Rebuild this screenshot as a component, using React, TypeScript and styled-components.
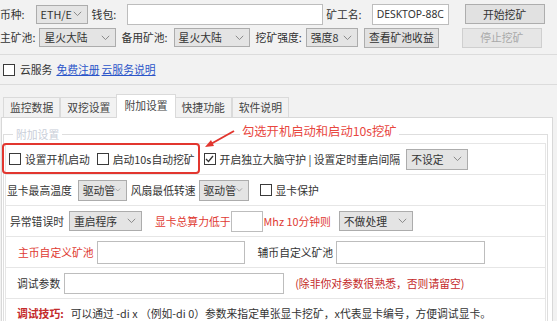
import React from "react";
import styled, { createGlobalStyle } from "styled-components";

const GlobalStyle = createGlobalStyle`
  body {
    margin: 0;
    background: #f2f2f2;
  }
`;

const Window = styled.div`
  position: relative;
  width: 557px;
  height: 321px;
  overflow: hidden;
  background: #f2f2f2;
  font-family: "Noto Sans CJK SC", "Microsoft YaHei", sans-serif;
  font-size: 10.8px;
  line-height: 1;
  color: #333;
`;

const ToolRow = styled.div<{ $top: number; $h: number }>`
  display: flex;
  align-items: center;
  height: ${(p) => p.$h}px;
  margin-top: ${(p) => p.$top}px;
  white-space: nowrap;
`;

const Text = styled.span<{ $ml?: number; $color?: string; $bold?: boolean }>`
  flex-shrink: 0;
  margin-left: ${(p) => p.$ml ?? 0}px;
  color: ${(p) => p.$color ?? "#333"};
  font-weight: ${(p) => (p.$bold ? 700 : 400)};
`;

const LinkText = styled.a<{ $ml?: number }>`
  flex-shrink: 0;
  margin-left: ${(p) => p.$ml ?? 0}px;
  color: #2b55c9;
  text-decoration: underline;
`;

const SelectBox = styled.div<{ $w: number; $h: number; $ml: number }>`
  box-sizing: border-box;
  flex-shrink: 0;
  display: flex;
  align-items: center;
  justify-content: space-between;
  width: ${(p) => p.$w}px;
  height: ${(p) => p.$h}px;
  margin-left: ${(p) => p.$ml}px;
  padding: 0 5px 0 4px;
  background: #e4e4e4;
  border: 1px solid #acacac;
  overflow: hidden;
`;

const Field = styled.div<{ $w: number; $h: number; $ml: number }>`
  box-sizing: border-box;
  flex-shrink: 0;
  display: flex;
  align-items: center;
  width: ${(p) => p.$w}px;
  height: ${(p) => p.$h}px;
  margin-left: ${(p) => p.$ml}px;
  padding-left: 4px;
  background: #fff;
  border: 1px solid #bdbdbd;
  font-family: "Noto Sans", "DejaVu Sans", sans-serif;
  font-size: 10.4px;
`;

const Button = styled.div<{ $w: number; $ml: number; $disabled?: boolean }>`
  box-sizing: border-box;
  flex-shrink: 0;
  display: flex;
  align-items: center;
  justify-content: center;
  width: ${(p) => p.$w}px;
  height: 20px;
  margin-left: ${(p) => p.$ml}px;
  background: ${(p) => (p.$disabled ? "#e6e6e6" : "#e1e1e1")};
  border: 1px solid ${(p) => (p.$disabled ? "#cfcfcf" : "#adadad")};
  color: ${(p) => (p.$disabled ? "#a9a9a9" : "#333")};
`;

const Divider = styled.div<{ $top: number }>`
  height: 1px;
  margin-top: ${(p) => p.$top}px;
  background: #dcdcdc;
`;

const Box = styled.div<{ $ml: number }>`
  box-sizing: border-box;
  flex-shrink: 0;
  display: flex;
  align-items: center;
  justify-content: center;
  width: 12px;
  height: 12px;
  margin-left: ${(p) => p.$ml}px;
  background: #fff;
  border: 1px solid #3a3a3a;
`;

const TabStrip = styled.div`
  display: flex;
  align-items: flex-end;
  height: 32px;
  padding-left: 3px;
  position: relative;
  z-index: 1;
`;

const Tab = styled.div<{ $active?: boolean }>`
  box-sizing: border-box;
  display: flex;
  align-items: center;
  justify-content: center;
  height: ${(p) => (p.$active ? 24 : 20)}px;
  margin: ${(p) => (p.$active ? "0 -1px -1px" : "0")};
  padding: ${(p) => (p.$active ? "0 7px 2px" : "0 6px")};
  background: ${(p) => (p.$active ? "#fff" : "#f2f2f2")};
  border: 1px solid #dadada;
  border-bottom: none;
  color: #444;
`;

const Panel = styled.div`
  box-sizing: border-box;
  width: 552px;
  height: 204px;
  margin-left: 1px;
  padding-top: 10px;
  background: #fff;
  border: 1px solid #d8d8d8;
  border-bottom: none;
`;

const Group = styled.fieldset`
  margin: 0 4px 0 1px;
  padding: 3px 1px 0;
  border: 1px solid #dedede;
  border-bottom: none;
  min-width: 0;
`;

const GroupTitle = styled.legend`
  margin-left: 8px;
  padding: 0 3px;
  font-size: 10.8px;
  line-height: 12px;
  color: #c9ced8;
`;

const SettingRow = styled.div<{ $pl: number; $first?: boolean }>`
  box-sizing: border-box;
  display: flex;
  align-items: center;
  height: ${(p) => (p.$first ? 32 : 31)}px;
  padding-left: ${(p) => p.$pl}px;
  border: 1px solid #e6e6e6;
  border-top: ${(p) => (p.$first ? "1px solid #e6e6e6" : "none")};
  white-space: nowrap;
`;

const TipRow = styled.div`
  display: flex;
  align-items: flex-start;
  height: 24px;
  padding: 9px 0 0 11px;
  box-sizing: border-box;
  border-left: 1px solid #e6e6e6;
  border-right: 1px solid #e6e6e6;
  white-space: nowrap;
`;

const RedFrame = styled.div`
  position: absolute;
  left: 2px;
  top: 143px;
  width: 198px;
  height: 31px;
  box-sizing: border-box;
  border: 2px solid #e2362f;
  border-radius: 4px;
`;

const Callout = styled.div`
  position: absolute;
  left: 240px;
  top: 124px;
  font-size: 12.3px;
  line-height: 14px;
  color: #e8473f;
  background: #fff;
  padding: 0 2px;
  white-space: nowrap;
`;

const ArrowSvg = styled.svg`
  position: absolute;
  left: 200px;
  top: 126px;
`;

const RED = "#e03a32";
const DARK_RED = "#c42a2a";

function Chevron() {
  return (
    <svg width="9" height="6" viewBox="0 0 9 6">
      <polyline points="0.8,0.8 4.5,4.6 8.2,0.8" fill="none" stroke="#8a8a8a" strokeWidth="1" />
    </svg>
  );
}

function Select({ w, h = 19, ml = 0, value }: { w: number; h?: number; ml?: number; value: string }) {
  return (
    <SelectBox $w={w} $h={h} $ml={ml}>
      <span>{value}</span>
      <Chevron />
    </SelectBox>
  );
}

function Check({ ml = 0, checked }: { ml?: number; checked?: boolean }) {
  return (
    <Box $ml={ml}>
      {checked && (
        <svg width="9" height="8" viewBox="0 0 9 8">
          <polyline points="1,4 3.5,6.5 8,1" fill="none" stroke="#333" strokeWidth="1.3" />
        </svg>
      )}
    </Box>
  );
}

export default function App() {
  return (
    <>
      <GlobalStyle />
      <Window>
        <ToolRow $top={3} $h={22}>
          <Text $ml={0}>币种:</Text>
          <Select w={52} h={19} ml={11} value="ETH/E" />
          <Text $ml={4}>钱包:</Text>
          <Field $w={196} $h={21} $ml={11} />
          <Text $ml={3}>矿工名:</Text>
          <Field $w={77} $h={21} $ml={10}>DESKTOP-88C</Field>
          <Button $w={80} $ml={16}>开始挖矿</Button>
        </ToolRow>
        <ToolRow $top={2} $h={21}>
          <Text $ml={0}>主矿池:</Text>
          <Select w={77} ml={4} value="星火大陆" />
          <Text $ml={5}>备用矿池:</Text>
          <Select w={76} ml={6} value="星火大陆" />
          <Text $ml={6}>挖矿强度:</Text>
          <Select w={52} ml={4} value="强度8" />
          <Button $w={75} $ml={6}>查看矿池收益</Button>
          <Button $w={80} $ml={23} $disabled>停止挖矿</Button>
        </ToolRow>
        <Divider $top={6} />
        <ToolRow $top={0} $h={29}>
          <Check ml={3} />
          <Text $ml={5}>云服务</Text>
          <LinkText $ml={4}>免费注册</LinkText>
          <LinkText $ml={2}>云服务说明</LinkText>
        </ToolRow>
        <Divider $top={0} />
        <TabStrip>
          <Tab>监控数据</Tab>
          <Tab>双挖设置</Tab>
          <Tab $active>附加设置</Tab>
          <Tab>快捷功能</Tab>
          <Tab>软件说明</Tab>
        </TabStrip>
        <Panel>
          <Group>
            <GroupTitle>附加设置</GroupTitle>
            <SettingRow $pl={3} $first>
              <Check ml={0} />
              <Text $ml={4}>设置开机启动</Text>
              <Check ml={7} />
              <Text $ml={4}>启动10s自动挖矿</Text>
              <Check ml={9} checked />
              <Text $ml={4}>开启独立大脑守护 | 设置定时重启间隔</Text>
              <Select w={62} h={21} ml={6} value="不设定" />
            </SettingRow>
            <SettingRow $pl={1}>
              <Text>显卡最高温度</Text>
              <Select w={49} h={21} ml={6} value="驱动管" />
              <Text $ml={4}>风扇最低转速</Text>
              <Select w={50} h={21} ml={3} value="驱动管" />
              <Check ml={11} />
              <Text $ml={4}>显卡保护</Text>
            </SettingRow>
            <SettingRow $pl={4}>
              <Text>异常错误时</Text>
              <Select w={73} h={20} ml={5} value="重启程序" />
              <Text $ml={13} $color={RED}>显卡总算力低于</Text>
              <Field $w={32} $h={21} $ml={0} />
              <Text $ml={1} $color={RED}>Mhz 10分钟则</Text>
              <Select w={74} h={20} ml={8} value="不做处理" />
            </SettingRow>
            <SettingRow $pl={12}>
              <Text $color={RED}>主币自定义矿池</Text>
              <Field $w={148} $h={23} $ml={3} />
              <Text $ml={13}>辅币自定义矿池</Text>
              <Field $w={149} $h={23} $ml={3} />
            </SettingRow>
            <SettingRow $pl={11}>
              <Text>调试参数</Text>
              <Field $w={220} $h={21} $ml={4} />
              <Text $ml={11} $color={DARK_RED}>(除非你对参数很熟悉，否则请留空)</Text>
            </SettingRow>
            <TipRow>
              <Text $color={DARK_RED} $bold>调试技巧:</Text>
              <Text $ml={7}>可以通过 -di x （例如-di 0）参数来指定单张显卡挖矿，x代表显卡编号，方便调试显卡。</Text>
            </TipRow>
          </Group>
        </Panel>
        <RedFrame />
        <ArrowSvg width="40" height="24" viewBox="0 0 40 24">
          <line x1="34" y1="5" x2="9" y2="19" stroke="#e2362f" strokeWidth="2" />
          <polygon points="5,21 11,14 14,20" fill="#e2362f" />
        </ArrowSvg>
        <Callout>勾选开机启动和启动10s挖矿</Callout>
      </Window>
    </>
  );
}
